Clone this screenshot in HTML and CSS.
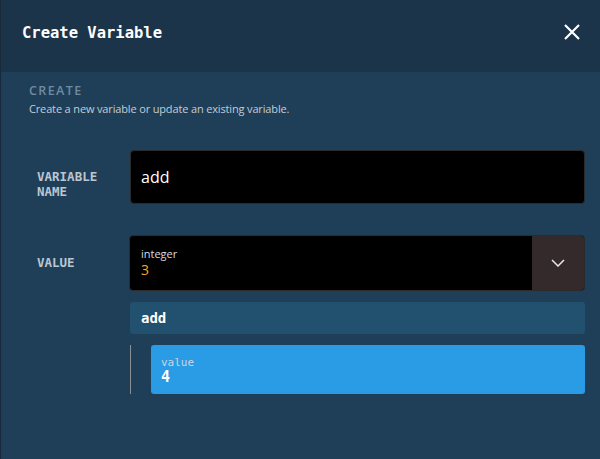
FILE: index.html
```html
<!DOCTYPE html>
<html>
<head>
<meta charset="utf-8">
<link rel="stylesheet" href="styles.css">
</head>
<body>
<div class="dialog">
  <header class="head">
    <h1 class="title">Create Variable</h1>
    <svg class="close" width="18" height="18" viewBox="0 0 18 18"><path d="M2 2 L16 16 M16 2 L2 16" stroke="#fff" stroke-width="2.2" fill="none"/></svg>
  </header>
  <section class="body">
    <div class="section-title">CREATE</div>
    <div class="section-desc">Create a new variable or update an existing variable.</div>
    <div class="rows">
      <div class="row">
        <div class="label">VARIABLE<br>NAME</div>
        <div class="input name-input">add</div>
      </div>
      <div class="row">
        <div class="label">VALUE</div>
        <div class="field">
          <div class="select">
            <div class="select-main">
              <div class="type">integer</div>
              <div class="num">3</div>
            </div>
            <div class="select-btn">
              <svg width="14" height="8" viewBox="0 0 14 8"><path d="M1 1 L7 7 L13 1" stroke="#e8e8e8" stroke-width="1.5" fill="none"/></svg>
            </div>
          </div>
          <div class="fn">add</div>
          <div class="args">
            <div class="arg">
              <div class="arg-name">value</div>
              <div class="arg-val">4</div>
            </div>
          </div>
        </div>
      </div>
    </div>
  </section>
</div>
</body>
</html>
```

FILE: styles.css
```css
html, body {
  margin: 0;
  padding: 0;
  background: #1f3f58;
}
.dialog {
  width: 600px;
  height: 459px;
  display: flex;
  flex-direction: column;
  border-left: 1px solid #15293a;
  box-sizing: border-box;
}
.head {
  height: 72px;
  background: #1c3449;
  display: flex;
  align-items: center;
  justify-content: space-between;
  padding: 0 19px 0 21px;
  flex-shrink: 0;
}
.title {
  margin: 0;
  font-family: "DejaVu Sans Mono", monospace;
  font-weight: bold;
  font-size: 15.5px;
  color: #ffffff;
  letter-spacing: 0;
  padding-bottom: 6px;
}
.close {
  margin-bottom: 8px;
}
.body {
  flex: 1;
  background: #1f3f58;
  padding: 11px 15px 0 28px;
}
.section-title {
  font-family: "Open Sans", sans-serif;
  font-weight: 600;
  font-size: 12.5px;
  letter-spacing: 1.4px;
  color: #6f8aa2;
  line-height: 16px;
}
.section-desc {
  font-family: "Open Sans", sans-serif;
  font-size: 11px;
  letter-spacing: -0.15px;
  color: #c3ccd5;
  line-height: 16px;
  margin-top: 2px;
}
.rows {
  margin-top: 33px;
  display: flex;
  flex-direction: column;
  gap: 31px;
}
.row {
  display: flex;
  align-items: flex-start;
}
.label {
  width: 92px;
  flex-shrink: 0;
  padding-left: 8px;
  font-family: "DejaVu Sans Mono", monospace;
  font-weight: bold;
  font-size: 12.5px;
  line-height: 15px;
  color: #bcc6d0;
  padding-top: 19px;
}
.row:nth-child(2) .label {
  padding-top: 20px;
}
.input {
  flex: 1;
  height: 54px;
  box-sizing: border-box;
  background: #000;
  border: 1px solid #2b2b2b;
  border-radius: 4px;
  display: flex;
  align-items: center;
  padding: 0 10px;
  font-family: "Open Sans", sans-serif;
  font-size: 16px;
  color: #fff;
  margin-left: 1px;
}
.field {
  flex: 1;
  display: flex;
  flex-direction: column;
}
.select {
  height: 56px;
  box-sizing: border-box;
  display: flex;
  background: #000;
  border: 1px solid #2b2b2b;
  border-radius: 4px;
  overflow: hidden;
}
.select-main {
  flex: 1;
  padding: 11px 11px 0;
}
.type {
  font-family: "Open Sans", sans-serif;
  font-size: 11px;
  color: #d8dde3;
  line-height: 14px;
}
.num {
  font-family: "Open Sans", sans-serif;
  font-size: 14px;
  color: #f5a623;
  line-height: 17px;
}
.select-btn {
  width: 52px;
  background: #352a2b;
  display: flex;
  align-items: center;
  justify-content: center;
}
.fn {
  margin-top: 11px;
  height: 32px;
  margin-left: 1px;
  background: #22506f;
  border-radius: 3px;
  display: flex;
  align-items: center;
  padding-left: 11px;
  font-family: "DejaVu Sans Mono", monospace;
  font-weight: bold;
  font-size: 14px;
  color: #fff;
}
.args {
  margin-top: 11px;
  margin-left: 1px;
  border-left: 1px solid #8a8f94;
  padding-left: 20px;
}
.arg {
  height: 49px;
  box-sizing: border-box;
  background: #2a9be5;
  border-radius: 3px;
  padding: 11px 10px 0;
}
.arg-name {
  font-family: "DejaVu Sans Mono", monospace;
  font-size: 11px;
  color: #c5d6e4;
  line-height: 13px;
}
.arg-val {
  font-family: "DejaVu Sans Mono", monospace;
  font-weight: bold;
  font-size: 15px;
  color: #fff;
  line-height: 17px;
}
```
